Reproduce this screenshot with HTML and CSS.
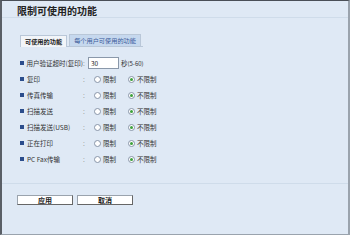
FILE: index.html
```html
<!DOCTYPE html>
<html lang="zh-CN">
<head>
    <meta charset="UTF-8">
    <title>限制可使用的功能</title>
    <link rel="stylesheet" href="styles.css">
</head>
<body>
    <div class="frame">
        <h1 class="title">限制可使用的功能</h1>

        <div class="tabs">
            <span class="tab active">可使用的功能</span>
            <span class="tab">每个用户可使用的功能</span>
        </div>

        <div class="rows">
            <div class="row">
                <span class="label">用户验证超时(复印)</span>
                <span class="colon">:</span>
                <input type="text" class="num" value="30">
                <span class="unit">秒<small>(5-60)</small></span>
            </div>
            <div class="row">
                <span class="label">复印</span>
                <span class="colon">:</span>
                <span class="radio"></span><span class="opt">限制</span>
                <span class="radio on"></span><span class="opt">不限制</span>
            </div>
            <div class="row">
                <span class="label">传真传输</span>
                <span class="colon">:</span>
                <span class="radio"></span><span class="opt">限制</span>
                <span class="radio on"></span><span class="opt">不限制</span>
            </div>
            <div class="row">
                <span class="label">扫描发送</span>
                <span class="colon">:</span>
                <span class="radio"></span><span class="opt">限制</span>
                <span class="radio on"></span><span class="opt">不限制</span>
            </div>
            <div class="row">
                <span class="label">扫描发送(USB)</span>
                <span class="colon">:</span>
                <span class="radio"></span><span class="opt">限制</span>
                <span class="radio on"></span><span class="opt">不限制</span>
            </div>
            <div class="row">
                <span class="label">正在打印</span>
                <span class="colon">:</span>
                <span class="radio"></span><span class="opt">限制</span>
                <span class="radio on"></span><span class="opt">不限制</span>
            </div>
            <div class="row">
                <span class="label">PC Fax传输</span>
                <span class="colon">:</span>
                <span class="radio"></span><span class="opt">限制</span>
                <span class="radio on"></span><span class="opt">不限制</span>
            </div>
        </div>

        <div class="buttons">
            <button class="btn">应用</button>
            <button class="btn">取消</button>
        </div>
    </div>
</body>
</html>
```

FILE: styles.css
```css
html, body {
    margin: 0;
    padding: 0;
}
body {
    font-family: "Noto Sans CJK SC", "DejaVu Sans", sans-serif;
    color: #333;
}
.frame {
    box-sizing: border-box;
    width: 350px;
    height: 235px;
    background: #dfe9f5;
    border-top: 1px solid #4a4f57;
    border-left: 2px solid #5a5f66;
    border-right: 2px solid #9aa3ad;
    border-bottom: 1px solid #9aa3ad;
}
.title {
    margin: 0;
    padding: 3px 0 0 15px;
    height: 13px;
    font-size: 10px;
    line-height: 13px;
    font-weight: bold;
    color: #222;
    border-bottom: 1px solid #cfdcea;
}
.tabs {
    display: flex;
    align-items: flex-end;
    margin: 16px 0 0 18px;
    width: 123px;
    border-bottom: 1px solid #b9c7d8;
}
.tab {
    font-size: 6.2px;
    line-height: 11px;
    height: 11px;
    padding: 0 4px;
    background: #c6d8ee;
    color: #3a5a9a;
    border: 1px solid #b9c7d8;
    border-bottom: none;
    margin-right: 2px;
    white-space: nowrap;
}
.tab.active {
    background: #f2f5f9;
    color: #222;
    font-weight: bold;
    position: relative;
    top: 1px;
}
.rows {
    margin: 8px 0 0 18px;
}
.row {
    display: flex;
    align-items: center;
    height: 16px;
    font-size: 6.5px;
}
.label {
    width: 63px;
    display: flex;
    align-items: center;
    white-space: nowrap;
}
.label::before {
    content: "";
    width: 4px;
    height: 4px;
    background: #2b4d8c;
    margin-right: 3px;
}
.colon {
    width: 5px;
    color: #999;
}
.num {
    box-sizing: border-box;
    width: 31px;
    height: 12px;
    margin: 0;
    padding: 0 2px;
    font-size: 6.5px;
    font-family: inherit;
    border: 1px solid #8a98aa;
    background: #fff;
    color: #222;
}
.unit {
    margin-left: 2px;
}
.unit small {
    font-size: 6px;
}
.radio {
    box-sizing: border-box;
    width: 7px;
    height: 7px;
    border: 1px solid #8895a8;
    border-radius: 50%;
    background: #fff;
    margin-left: 6px;
    margin-right: 2px;
    display: flex;
    align-items: center;
    justify-content: center;
}
.radio.on::after {
    content: "";
    width: 3px;
    height: 3px;
    border-radius: 50%;
    background: #3ca03c;
}
.opt {
    width: 19px;
    white-space: nowrap;
}
.buttons {
    margin: 16px 0 0 0;
    padding: 11px 0 0 15px;
    border-top: 1px solid #cfdcea;
    display: flex;
    gap: 4px;
}
.btn {
    width: 56px;
    height: 10px;
    padding: 0;
    margin: 0;
    font-size: 7px;
    line-height: 8px;
    font-weight: bold;
    font-family: "Noto Sans CJK SC", serif;
    background: #fff;
    color: #222;
    border: 1px solid #9aa3ad;
    border-right-color: #666;
    border-bottom-color: #666;
}
```
